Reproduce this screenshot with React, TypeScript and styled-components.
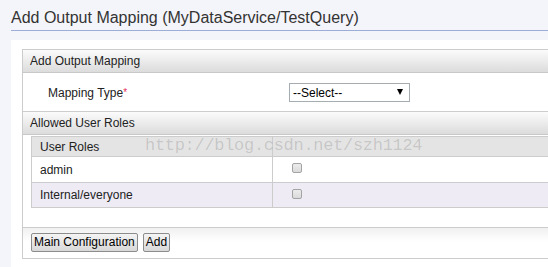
import React from 'react'
import styled, { createGlobalStyle } from 'styled-components'

const GlobalStyle = createGlobalStyle`
  html, body {
    margin: 0;
    padding: 0;
    background: #f4f5fa;
    overflow: hidden;
    font-family: "Liberation Sans", Arial, sans-serif;
    color: #222;
  }
`

const Page = styled.div`
  position: relative;
  padding-left: 11px;
  min-height: 267px;
`

const Title = styled.h2`
  margin: 0;
  padding: 9px 0 3px;
  font-size: 16px;
  line-height: 18px;
  font-weight: normal;
  color: #333;
  border-bottom: 1px solid #9eadd6;
  white-space: nowrap;
`

const Content = styled.div`
  margin-top: 9px;
  background: #fff;
  padding: 9px 0 8px 11px;
`

const Panel = styled.div`
  border: 1px solid #ccc;
  margin-right: -40px;
`

const SectionHeader = styled.div<{ $divided?: boolean }>`
  height: 22px;
  line-height: 22px;
  padding-left: 7px;
  font-size: 12px;
  background: linear-gradient(#fbfbfb, #dcdcdc);
  border-top: ${p => (p.$divided ? '1px solid #ccc' : 'none')};
  border-bottom: 1px solid #c8c8c8;
`

const FormRow = styled.div`
  height: 38px;
  display: grid;
  grid-template-columns: 241px auto;
  align-items: center;
  padding-left: 25px;
`

const Label = styled.label`
  font-size: 12px;
  padding-top: 1px;
`

const Required = styled.span`
  color: #e8305a;
  font-size: 10px;
  vertical-align: 1px;
`

const SelectWrap = styled.span`
  position: relative;
  display: inline-block;
  width: 121px;
  height: 19px;

  &::after {
    content: '';
    position: absolute;
    right: 7px;
    top: 6px;
    border-left: 3.5px solid transparent;
    border-right: 3.5px solid transparent;
    border-top: 6px solid #000;
    pointer-events: none;
  }
`

const Select = styled.select`
  appearance: none;
  -webkit-appearance: none;
  box-sizing: border-box;
  width: 121px;
  height: 19px;
  margin: 0;
  padding: 0 0 0 3px;
  border: 1px solid #a5acb2;
  border-radius: 0;
  background: #fff;
  font-family: "Liberation Sans", Arial, sans-serif;
  font-size: 12px;
  color: #000;
`

const TableArea = styled.div`
  padding: 1px 0 19px 8px;
`

const RoleTable = styled.div`
  display: grid;
  grid-template-columns: 241px 1fr;
  border: 1px solid #ccc;
  font-size: 12px;
`

const Cell = styled.div<{ $head?: boolean; $alt?: boolean; $first?: boolean; $lead?: boolean }>`
  box-sizing: border-box;
  height: ${p => (p.$head ? '19px' : p.$first ? '25px' : '26px')};
  display: flex;
  align-items: ${p => (p.$lead ? 'center' : 'flex-start')};
  padding: ${p => (p.$lead ? '0 0 0 8px' : '6px 0 0 19px')};
  background: ${p => (p.$head ? '#e4e4e4' : p.$alt ? '#eeebf5' : '#fff')};
  border-top: ${p => (p.$head ? 'none' : '1px solid #ccc')};
  border-right: ${p => (p.$lead ? '1px solid #ccc' : 'none')};
`

const Check = styled.input`
  appearance: none;
  -webkit-appearance: none;
  box-sizing: border-box;
  width: 10px;
  height: 10px;
  margin: 0;
  border: 1px solid #a3a3a3;
  border-radius: 2px;
  background: linear-gradient(#ececec, #dadada);
`

const Footer = styled.div`
  display: flex;
  gap: 5px;
  height: 31px;
  padding: 5px 0 0 8px;
  box-sizing: border-box;
  border-top: 1px solid #ccc;
  background: linear-gradient(#f0f0f0, #fff 45%);
`

const Button = styled.button`
  height: 19px;
  margin: 0;
  padding: 0 2px;
  border: 1px solid #8c8c8c;
  border-radius: 2px;
  background: linear-gradient(#f4f4f4, #d8d8d8);
  font-family: "Liberation Sans", Arial, sans-serif;
  font-size: 12px;
  line-height: 17px;
  color: #000;
`

const Watermark = styled.div`
  position: absolute;
  left: 145px;
  top: 137px;
  font-family: "Liberation Mono", "Courier New", monospace;
  font-size: 17px;
  line-height: 17px;
  letter-spacing: -0.3px;
  color: rgba(0, 0, 0, 0.14);
  pointer-events: none;
  white-space: nowrap;
`

const roles = ['admin', 'Internal/everyone']

export default function App() {
  return (
    <Page>
      <GlobalStyle />
      <Title>Add Output Mapping (MyDataService/TestQuery)</Title>
      <Content>
        <Panel>
          <SectionHeader>Add Output Mapping</SectionHeader>
          <FormRow>
            <Label>
              Mapping Type<Required>*</Required>
            </Label>
            <SelectWrap>
              <Select defaultValue="">
                <option value="">--Select--</option>
              </Select>
            </SelectWrap>
          </FormRow>
          <SectionHeader $divided>Allowed User Roles</SectionHeader>
          <TableArea>
            <RoleTable>
              <Cell $head $lead>User Roles</Cell>
              <Cell $head />
              {roles.map((role, i) => (
                <React.Fragment key={role}>
                  <Cell $lead $alt={i % 2 === 1} $first={i === 1}>{role}</Cell>
                  <Cell $alt={i % 2 === 1} $first={i === 1}>
                    <Check type="checkbox" />
                  </Cell>
                </React.Fragment>
              ))}
            </RoleTable>
          </TableArea>
          <Footer>
            <Button>Main Configuration</Button>
            <Button>Add</Button>
          </Footer>
        </Panel>
      </Content>
      <Watermark>http://blog.csdn.net/szh1124</Watermark>
    </Page>
  )
}
